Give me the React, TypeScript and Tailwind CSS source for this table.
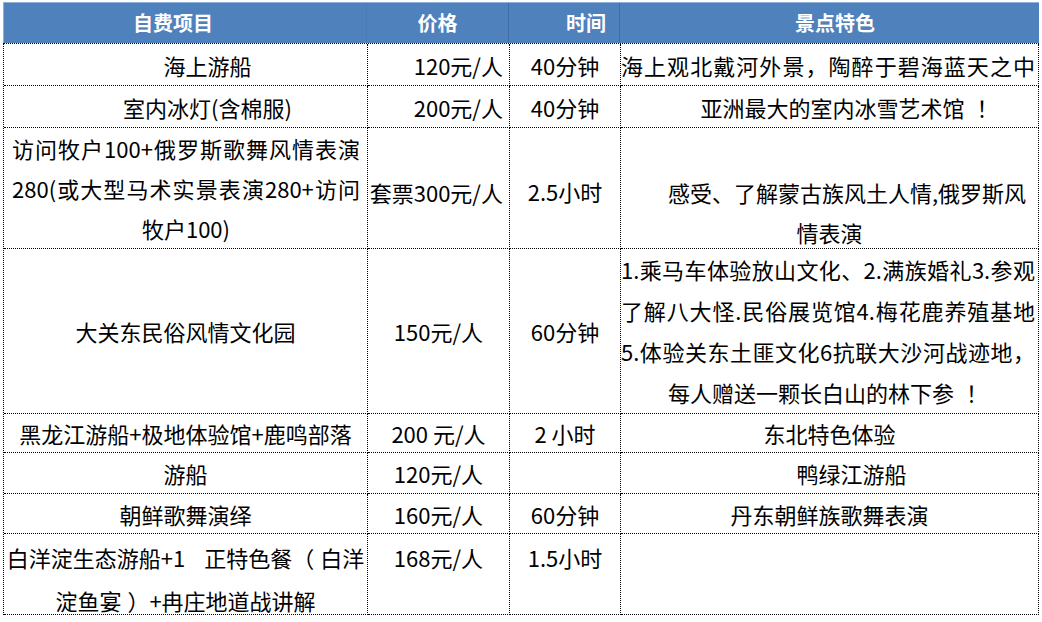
import React from "react";

type CellProps = { className?: string; children?: React.ReactNode };

function Cell({ className = "", children }: CellProps) {
  return (
    <div
      className={`flex overflow-hidden border-r border-b border-dotted border-black text-[22px] leading-[40px] whitespace-nowrap ${className}`}
    >
      {children}
    </div>
  );
}

// one justified line that spans the full cell width
function Line({ children }: { children: React.ReactNode }) {
  return <div className="w-full text-justify [text-align-last:justify]">{children}</div>;
}

// the exclamation mark sits away from the last character in the source sheet
function Bang() {
  return <span className="inline-block pl-[12px]">！</span>;
}

export default function App() {
  return (
    <div className="min-h-screen bg-white pt-[2px] pl-[3px] font-['Noto_Sans_CJK_SC',sans-serif] text-black">
      <div className="w-[1036px]">
        {/* header */}
        <div className="flex h-[41px] border-t border-l border-[#8fb0d9] bg-[#4f81bd] text-[20px] font-bold text-white">
          <div className="flex w-[363px] items-center justify-center border-r border-[#4a7bb6] pr-[24px]">自费项目</div>
          <div className="flex w-[142px] items-center justify-center border-r border-[#3f6ea6]">价格</div>
          <div className="flex w-[111px] items-center justify-center border-r border-[#3f6ea6] pl-[44px]">时间</div>
          <div className="flex flex-1 items-center justify-center pl-[11px]">景点特色</div>
        </div>

        {/* body */}
        <div className="grid grid-cols-[364px_142px_111px_418px] grid-rows-[42px_42px_121px_165px_39px_41px_40px_81px] border-t border-l border-dotted border-black">
          {/* row 1 */}
          <Cell className="items-center justify-center pl-[44px]">海上游船</Cell>
          <Cell className="items-center justify-end pr-[6px]">120元/人</Cell>
          <Cell className="items-center justify-center">40分钟</Cell>
          <Cell className="items-center pr-[3px]">
            <Line>海上观北戴河外景，陶醉于碧海蓝天之中</Line>
          </Cell>

          {/* row 2 */}
          <Cell className="items-center justify-center pl-[44px]">室内冰灯(含棉服)</Cell>
          <Cell className="items-center justify-end pr-[6px]">200元/人</Cell>
          <Cell className="items-center justify-center">40分钟</Cell>
          <Cell className="items-center justify-center pl-[40px]">
            亚洲最大的室内冰雪艺术馆<Bang />
          </Cell>

          {/* row 3 */}
          <Cell className="flex-col justify-center pl-[8px] pr-[7px]">
            <Line>访问牧户100+俄罗斯歌舞风情表演</Line>
            <Line>280(或大型马术实景表演280+访问</Line>
            <div className="text-center">牧户100)</div>
          </Cell>
          <Cell className="items-center justify-end pr-[6px] pt-[8px]">套票300元/人</Cell>
          <Cell className="items-center justify-center pt-[6px]">2.5小时</Cell>
          <Cell className="flex-col pt-[44px] leading-[38px]">
            <div className="pl-[47px] text-left">感受、了解蒙古族风土人情,俄罗斯风</div>
            <div className="text-center">情表演</div>
          </Cell>

          {/* row 4 */}
          <Cell className="items-center justify-center">大关东民俗风情文化园</Cell>
          <Cell className="items-center justify-center">150元/人</Cell>
          <Cell className="items-center justify-center">60分钟</Cell>
          <Cell className="flex-col justify-center pr-[3px] leading-[41px]">
            <Line>1.乘马车体验放山文化、2.满族婚礼3.参观</Line>
            <Line>了解八大怪.民俗展览馆4.梅花鹿养殖基地</Line>
            <Line>5.体验关东土匪文化6抗联大沙河战迹地，</Line>
            <div className="text-center">
              每人赠送一颗长白山的林下参<Bang />
            </div>
          </Cell>

          {/* row 5 */}
          <Cell className="items-center justify-center">黑龙江游船+极地体验馆+鹿鸣部落</Cell>
          <Cell className="items-center justify-center">200 元/人</Cell>
          <Cell className="items-center justify-center">2 小时</Cell>
          <Cell className="items-center justify-center">东北特色体验</Cell>

          {/* row 6 */}
          <Cell className="items-center justify-center">游船</Cell>
          <Cell className="items-center justify-center">120元/人</Cell>
          <Cell />
          <Cell className="items-center justify-center pl-[44px]">鸭绿江游船</Cell>

          {/* row 7 */}
          <Cell className="items-center justify-center">朝鲜歌舞演绎</Cell>
          <Cell className="items-center justify-center">160元/人</Cell>
          <Cell className="items-center justify-center">60分钟</Cell>
          <Cell className="items-center justify-center">丹东朝鲜族歌舞表演</Cell>

          {/* row 8 */}
          <Cell className="flex-col pt-[2px] leading-[43px] text-center">
            <div>
              白洋淀生态游船+1<span className="inline-block w-[19px]" />正特色餐
              <span className="inline-block pr-[6px]">（</span>
              白洋
            </div>
            <div>
              淀鱼宴
              <span className="inline-block pl-[6px]">）</span>
              +冉庄地道战讲解
            </div>
          </Cell>
          <Cell className="justify-center pt-[2px] leading-[43px]">168元/人</Cell>
          <Cell className="justify-center pt-[2px] leading-[43px]">1.5小时</Cell>
          <Cell />
        </div>
      </div>
    </div>
  );
}
